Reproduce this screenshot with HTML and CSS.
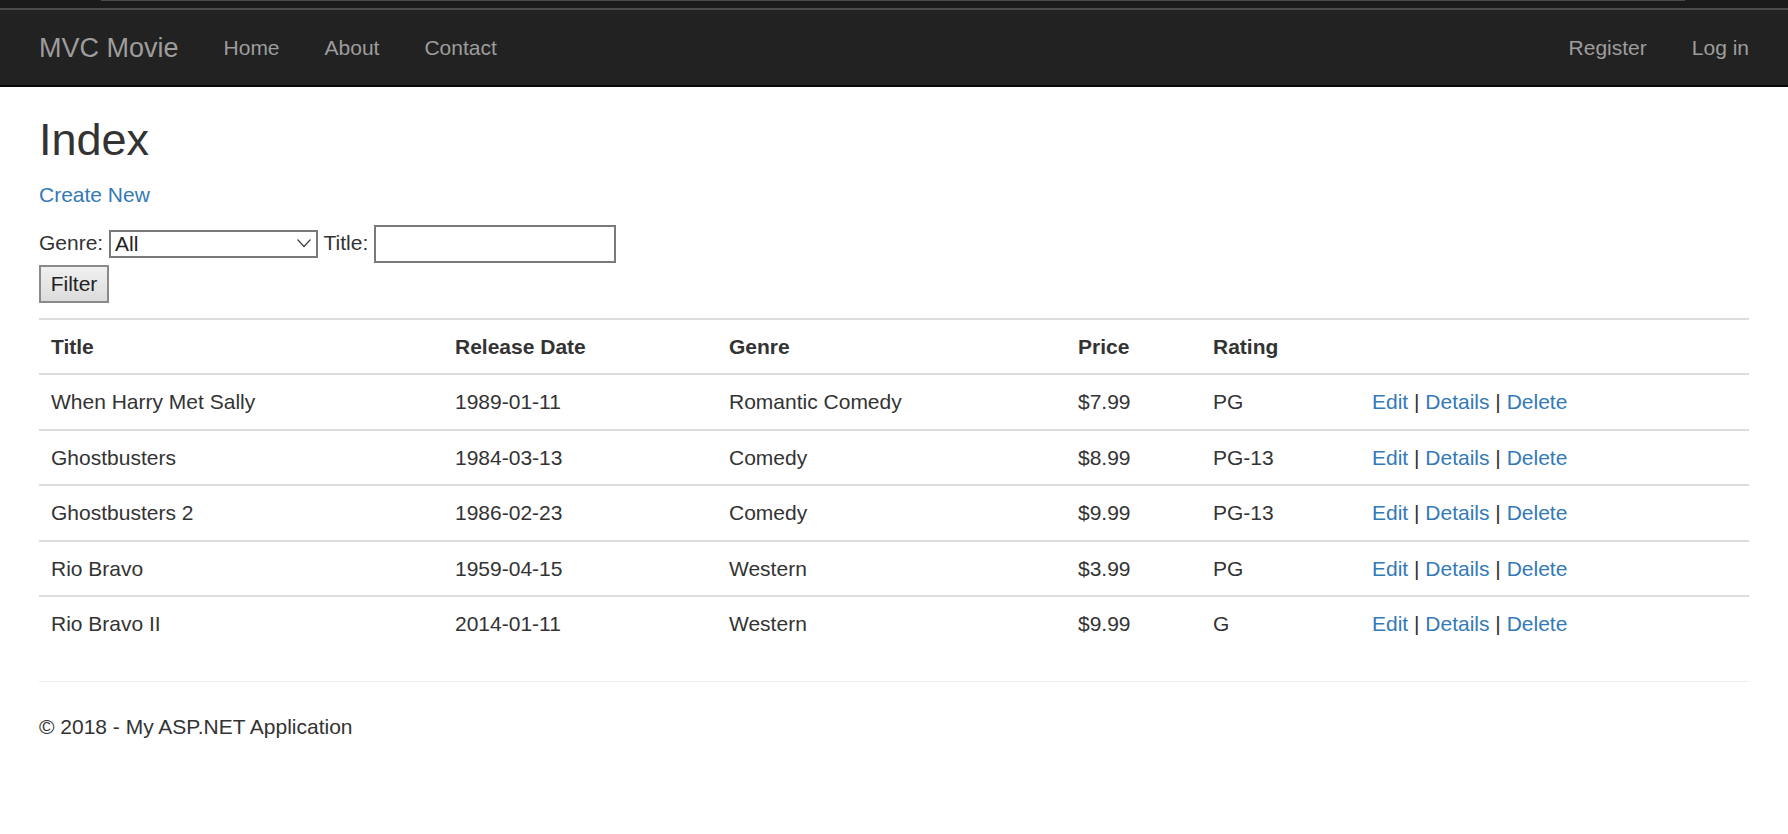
FILE: index.html
```html
<!DOCTYPE html>
<html lang="en">
<head>
<meta charset="utf-8">
<title>Index - My ASP.NET Application</title>
<link rel="stylesheet" href="styles.css">
</head>
<body>
<div class="chrome"><div class="chrome-line"></div></div>
<nav class="navbar">
  <div class="container nav-inner">
    <a class="brand" href="#">MVC Movie</a>
    <ul class="nav">
      <li><a href="#">Home</a></li>
      <li><a href="#">About</a></li>
      <li><a href="#">Contact</a></li>
    </ul>
    <ul class="nav nav-right">
      <li><a href="#">Register</a></li>
      <li><a href="#">Log in</a></li>
    </ul>
  </div>
</nav>
<main class="container body-content">
  <h2 class="page-title">Index</h2>
  <p class="create"><a href="#">Create New</a></p>
  <form class="filter-form">
    <p class="filter-p">Genre: <span class="select-wrap"><select class="genre-select"><option>All</option><option>Comedy</option><option>Romantic Comedy</option><option>Western</option></select><svg class="chev" width="14" height="9" viewBox="0 0 14 9"><path d="M0.5 0.5 L7 7.5 L13.5 0.5" fill="none" stroke="#444" stroke-width="1.2"/></svg></span> Title: <input class="title-input" type="text"><br>
    <input class="filter-btn" type="submit" value="Filter"></p>
  </form>
  <table class="table">
    <tr>
      <th class="c1">Title</th>
      <th class="c2">Release Date</th>
      <th class="c3">Genre</th>
      <th class="c4">Price</th>
      <th class="c5">Rating</th>
      <th class="c6"></th>
    </tr>
    <tr>
      <td>When Harry Met Sally</td>
      <td>1989-01-11</td>
      <td>Romantic Comedy</td>
      <td>$7.99</td>
      <td>PG</td>
      <td><a href="#">Edit</a> | <a href="#">Details</a> | <a href="#">Delete</a></td>
    </tr>
    <tr>
      <td>Ghostbusters</td>
      <td>1984-03-13</td>
      <td>Comedy</td>
      <td>$8.99</td>
      <td>PG-13</td>
      <td><a href="#">Edit</a> | <a href="#">Details</a> | <a href="#">Delete</a></td>
    </tr>
    <tr>
      <td>Ghostbusters 2</td>
      <td>1986-02-23</td>
      <td>Comedy</td>
      <td>$9.99</td>
      <td>PG-13</td>
      <td><a href="#">Edit</a> | <a href="#">Details</a> | <a href="#">Delete</a></td>
    </tr>
    <tr>
      <td>Rio Bravo</td>
      <td>1959-04-15</td>
      <td>Western</td>
      <td>$3.99</td>
      <td>PG</td>
      <td><a href="#">Edit</a> | <a href="#">Details</a> | <a href="#">Delete</a></td>
    </tr>
    <tr>
      <td>Rio Bravo II</td>
      <td>2014-01-11</td>
      <td>Western</td>
      <td>$9.99</td>
      <td>G</td>
      <td><a href="#">Edit</a> | <a href="#">Details</a> | <a href="#">Delete</a></td>
    </tr>
  </table>
  <hr class="rule">
  <footer class="footer">
    <p>&copy; 2018 - My ASP.NET Application</p>
  </footer>
</main>
</body>
</html>
```
FILE: styles.css
```css
* { box-sizing: border-box; }

html, body {
  margin: 0;
  padding: 0;
  background: #fff;
}

body {
  font-family: "Liberation Sans", Arial, Helvetica, sans-serif;
  font-size: 21px;
  line-height: 30px;
  color: #333;
}

a {
  color: #337ab7;
  text-decoration: none;
}

.chrome {
  height: 10px;
  background: #1b1b1b;
  border-bottom: 2px solid #4b4b4b;
  position: relative;
}

.chrome-line {
  margin-left: 101px;
  width: 1584px;
  height: 1px;
  background: #4a4a4a;
}

.container {
  padding: 0 39px;
}

.navbar {
  background: #222;
  height: 77px;
  border-bottom: 2px solid #080808;
}

.nav-inner {
  display: flex;
  align-items: center;
  height: 75px;
}

.brand {
  font-size: 27px;
  line-height: 30px;
  color: #9d9d9d;
  padding-right: 22.5px;
}

.nav {
  display: flex;
  list-style: none;
  margin: 0;
  padding: 0;
}

.nav a {
  display: block;
  padding: 0 22.5px;
  color: #9d9d9d;
  font-size: 21px;
  line-height: 30px;
}

.nav-right {
  margin-left: auto;
  margin-right: -22.5px;
}

.page-title {
  font-size: 45px;
  line-height: 49.5px;
  font-weight: normal;
  margin: 28px 0 15px;
  color: #333;
}

.create {
  margin: 0 0 15px;
}

.filter-form {
  margin: 0;
}

.filter-p {
  margin: 0 0 15px;
}

.select-wrap {
  position: relative;
  display: inline-block;
  vertical-align: middle;
}

.genre-select {
  -webkit-appearance: none;
  appearance: none;
  display: block;
  width: 209px;
  height: 28px;
  border: 2px solid #7a7a7a;
  border-radius: 0;
  background: #fff;
  font-family: "Liberation Sans", Arial, sans-serif;
  font-size: 21px;
  line-height: 24px;
  color: #222;
  padding: 0 0 0 4px;
  margin: 0;
}

.chev {
  position: absolute;
  right: 7px;
  top: 9px;
  pointer-events: none;
}

.title-input {
  vertical-align: middle;
  width: 242px;
  height: 38px;
  border: 2px solid #7a7a7a;
  border-radius: 0;
  background: #fff;
  font-family: "Liberation Sans", Arial, sans-serif;
  font-size: 21px;
  padding: 0 4px;
  margin: 0;
}

.filter-btn {
  vertical-align: middle;
  width: 70px;
  height: 38px;
  margin: 2px 0 0;
  padding: 0;
  border: 2px solid #8a8a8a;
  border-radius: 0;
  background: linear-gradient(#f0f0f0, #dcdcdc);
  font-family: "Liberation Sans", Arial, sans-serif;
  font-size: 21px;
  color: #222;
}

.table {
  width: 100%;
  border-collapse: collapse;
  table-layout: fixed;
  margin: 0 0 30px;
}

.table th,
.table td {
  text-align: left;
  vertical-align: top;
  padding: 12px 12px 11.5px;
  line-height: 30px;
  border-top: 2px solid #ddd;
}

.table th {
  font-weight: bold;
}

.c1 { width: 404px; }
.c2 { width: 274px; }
.c3 { width: 349px; }
.c4 { width: 135px; }
.c5 { width: 159px; }

.rule {
  border: 0;
  border-top: 1px solid #eee;
  margin: 30px 0;
  height: 0;
}

.footer p {
  margin: 0 0 15px;
}
```
